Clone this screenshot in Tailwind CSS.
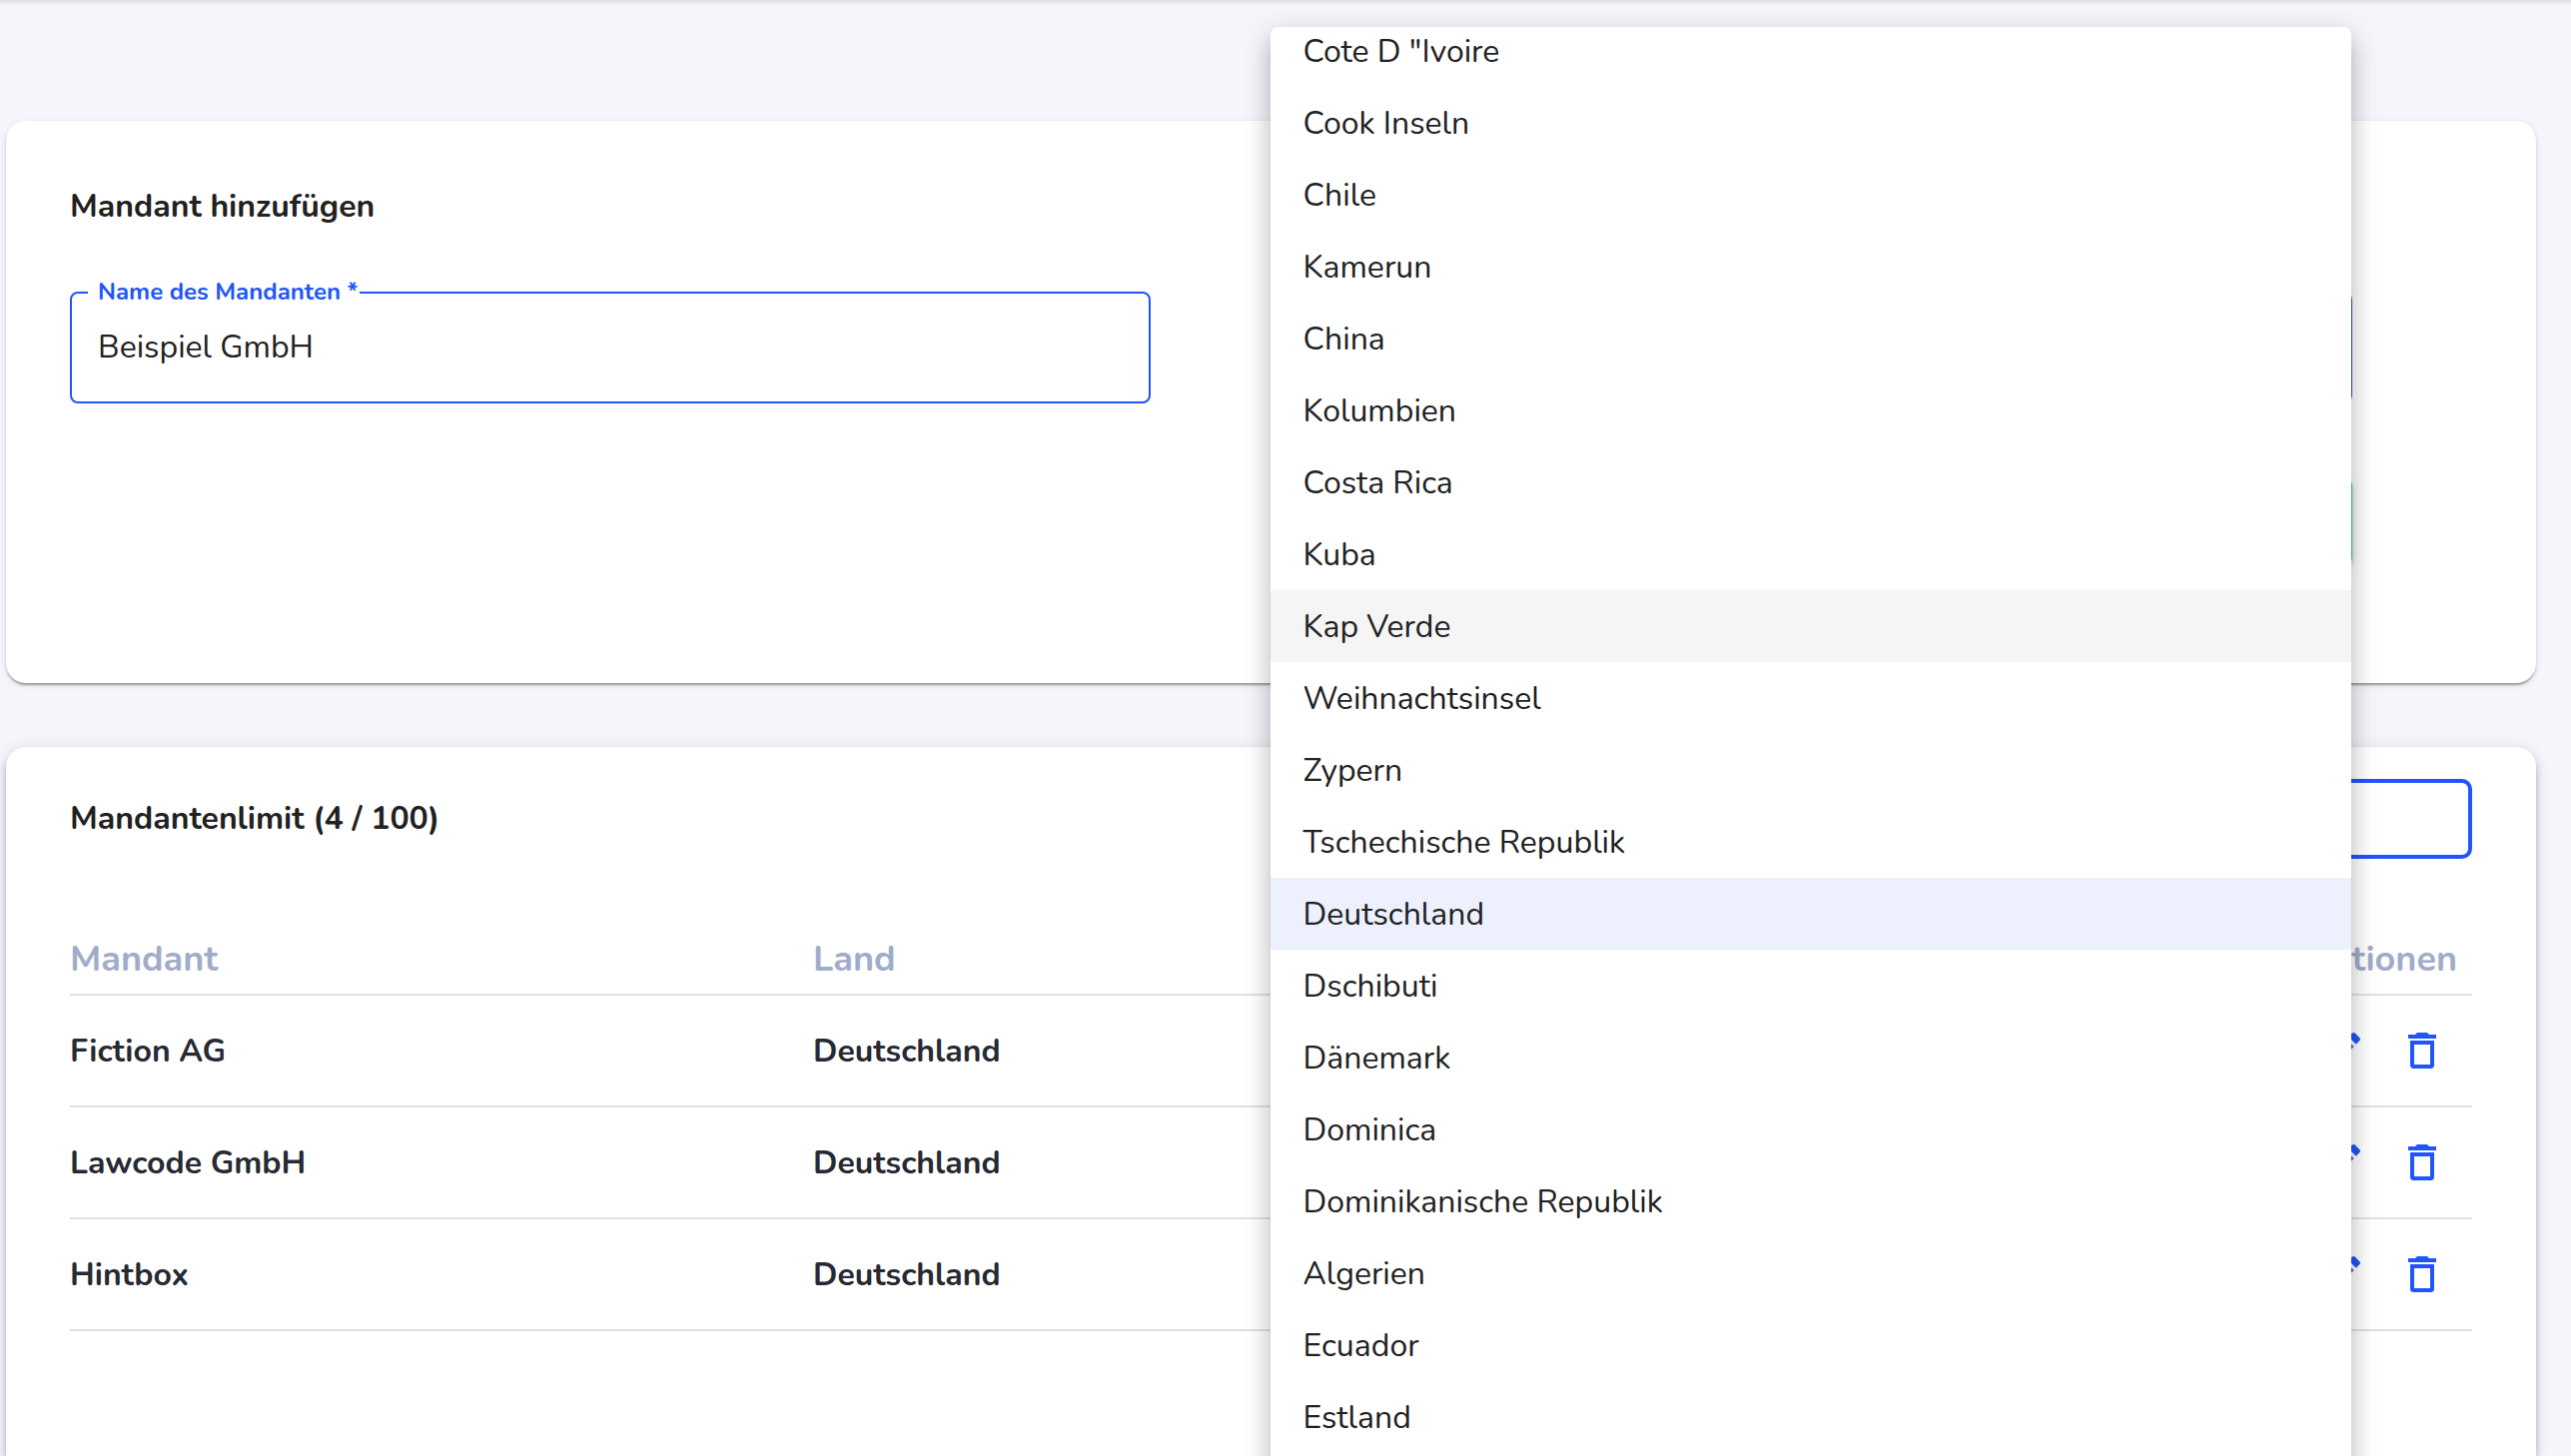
<!DOCTYPE html>
<html lang="de">
<head>
<meta charset="utf-8">
<title>Mandanten</title>
<script src="https://cdn.jsdelivr.net/npm/@tailwindcss/browser@4"></script>
</head>
<body class="bg-[#f5f6fc] font-['Nunito','Lato',sans-serif] text-[32px] leading-[40px] text-[#212121]">
<svg class="hidden">
  <symbol id="edit" viewBox="0 0 24 24"><path d="M3 17.25V21h3.75L17.81 9.94l-3.75-3.75L3 17.25zM20.71 7.04c.39-.39.39-1.02 0-1.41l-2.34-2.34c-.39-.39-1.02-.39-1.41 0l-1.83 1.83 3.75 3.75 1.83-1.83z"/></symbol>
  <symbol id="trash" viewBox="0 0 24 24"><path d="M15.5 4l-1-1h-5l-1 1H5v2h14V4zM6 19.5c0 .8.7 1.500 1.500 1.500h9c.8 0 1.500-.7 1.500-1.500V7H6v12.500zM8 9h8v10H8V9z"/></symbol>
</svg>
<main class="flex h-screen flex-col overflow-hidden bg-linear-to-b from-[#dcdce2] to-[#f5f6fc] bg-[length:100%_5px] bg-no-repeat pt-[121px] pr-[35px] pl-[6px]">

  <section class="rounded-[20px] bg-white px-16 pt-[66px] pb-[122px] shadow-[0_4px_2px_-2px_rgba(0,0,0,0.2),0_2px_2px_0_rgba(0,0,0,0.14),0_2px_6px_0_rgba(0,0,0,0.12)]">
    <h2 class="font-bold">Mandant hinzufügen</h2>
    <form class="mt-[65px] grid grid-cols-[45%_45%] gap-x-[5%]">
      <div class="relative">
        <label for="name" class="absolute -top-4 left-[18px] bg-white pr-0.5 pl-[10px] text-[24px] leading-[32px] font-bold text-[#2155fb]">Name des Mandanten *</label>
        <input id="name" type="text" value="Beispiel GmbH" class="block h-28 w-full rounded-[8px] border-2 border-[#2155fb] bg-white px-[26px] pb-0.5 outline-none">
      </div>
      <div class="relative">
        <select id="country" aria-label="Land" class="block h-28 w-full appearance-none rounded-[8px] border-2 border-[#2155fb] bg-white px-[26px]"><option>Deutschland</option></select>
        <!-- open country list, scrolled to the selected entry -->
        <div class="absolute -top-[265px] -left-px z-10 h-screen w-full overflow-hidden rounded-[8px] bg-white shadow-[0_10px_10px_-6px_rgba(0,0,0,0.2),0_16px_20px_2px_rgba(0,0,0,0.14),0_6px_28px_4px_rgba(0,0,0,0.12)]">
          <ul role="listbox" aria-label="Land" class="-mt-3">
            <li role="option" class="px-[33px] pt-[17px] pb-[15px]">Cote D "Ivoire</li>
            <li role="option" class="px-[33px] pt-[17px] pb-[15px]">Cook Inseln</li>
            <li role="option" class="px-[33px] pt-[17px] pb-[15px]">Chile</li>
            <li role="option" class="px-[33px] pt-[17px] pb-[15px]">Kamerun</li>
            <li role="option" class="px-[33px] pt-[17px] pb-[15px]">China</li>
            <li role="option" class="px-[33px] pt-[17px] pb-[15px]">Kolumbien</li>
            <li role="option" class="px-[33px] pt-[17px] pb-[15px]">Costa Rica</li>
            <li role="option" class="px-[33px] pt-[17px] pb-[15px]">Kuba</li>
            <li role="option" class="bg-[#f5f5f5] px-[33px] pt-[17px] pb-[15px]">Kap Verde</li>
            <li role="option" class="px-[33px] pt-[17px] pb-[15px]">Weihnachtsinsel</li>
            <li role="option" class="px-[33px] pt-[17px] pb-[15px]">Zypern</li>
            <li role="option" class="px-[33px] pt-[17px] pb-[15px]">Tschechische Republik</li>
            <li role="option" aria-selected="true" class="bg-[#edf1ff] px-[33px] pt-[17px] pb-[15px]">Deutschland</li>
            <li role="option" class="px-[33px] pt-[17px] pb-[15px]">Dschibuti</li>
            <li role="option" class="px-[33px] pt-[17px] pb-[15px]">Dänemark</li>
            <li role="option" class="px-[33px] pt-[17px] pb-[15px]">Dominica</li>
            <li role="option" class="px-[33px] pt-[17px] pb-[15px]">Dominikanische Republik</li>
            <li role="option" class="px-[33px] pt-[17px] pb-[15px]">Algerien</li>
            <li role="option" class="px-[33px] pt-[17px] pb-[15px]">Ecuador</li>
            <li role="option" class="px-[33px] pt-[17px] pb-[15px]">Estland</li>
          </ul>
        </div>
      </div>
      <button type="submit" aria-label="Hinzufügen" class="col-start-2 mt-[78px] h-20 w-60 justify-self-end rounded-[4px] bg-[#38da68] shadow-[0_6px_2px_-4px_rgba(0,0,0,0.2),0_4px_4px_0_rgba(0,0,0,0.14),0_2px_10px_0_rgba(0,0,0,0.12)]"></button>
    </form>
  </section>

  <section class="mt-16 flex-1 rounded-t-[20px] bg-white px-16 pt-8 shadow-[0_6px_6px_-2px_rgba(0,0,0,0.2),0_6px_8px_0_rgba(0,0,0,0.14),0_2px_16px_0_rgba(0,0,0,0.12)]">
    <div class="flex h-20 items-center justify-between">
      <h2 class="font-bold">Mandantenlimit (4 / 100)</h2>
      <input type="search" aria-label="Suche" class="h-20 w-[600px] rounded-[10px] border-4 border-[#2155fb] bg-white px-6 outline-none">
    </div>
    <table class="mt-[62px] w-full table-fixed border-collapse text-left font-bold text-[#262a33]">
      <thead class="text-[36px] text-[#a1acc9]">
        <tr class="h-[74px] border-b-2 border-[#e0e0e0]">
          <th class="w-[744px] pt-1">Mandant</th>
          <th class="pt-1">Land</th>
          <th class="w-[400px] pt-1 pr-[15px] text-right">Aktionen</th>
        </tr>
      </thead>
      <tbody>
        <tr class="h-28 border-b-2 border-[#e0e0e0]">
          <td class="pt-0.5">Fiction AG</td>
          <td class="pt-0.5">Deutschland</td>
          <td class="pr-[26px]"><div class="flex justify-end gap-8 text-[#2155fb]"><button aria-label="Bearbeiten"><svg class="size-12 fill-current"><use href="#edit"/></svg></button><button aria-label="Löschen"><svg class="size-12 fill-current"><use href="#trash"/></svg></button></div></td>
        </tr>
        <tr class="h-28 border-b-2 border-[#e0e0e0]">
          <td class="pt-0.5">Lawcode GmbH</td>
          <td class="pt-0.5">Deutschland</td>
          <td class="pr-[26px]"><div class="flex justify-end gap-8 text-[#2155fb]"><button aria-label="Bearbeiten"><svg class="size-12 fill-current"><use href="#edit"/></svg></button><button aria-label="Löschen"><svg class="size-12 fill-current"><use href="#trash"/></svg></button></div></td>
        </tr>
        <tr class="h-28 border-b-2 border-[#e0e0e0]">
          <td class="pt-0.5">Hintbox</td>
          <td class="pt-0.5">Deutschland</td>
          <td class="pr-[26px]"><div class="flex justify-end gap-8 text-[#2155fb]"><button aria-label="Bearbeiten"><svg class="size-12 fill-current"><use href="#edit"/></svg></button><button aria-label="Löschen"><svg class="size-12 fill-current"><use href="#trash"/></svg></button></div></td>
        </tr>
      </tbody>
    </table>
  </section>
</main>
</body>
</html>
